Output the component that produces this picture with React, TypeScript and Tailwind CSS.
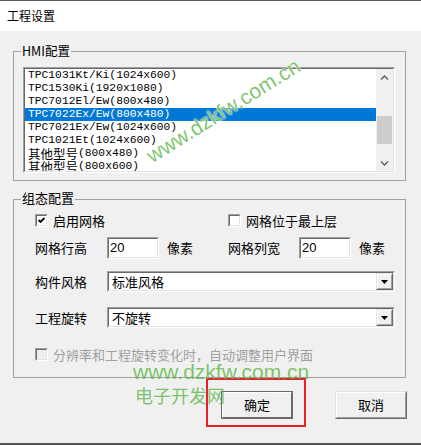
import React from 'react';

const models = [
  'TPC1031Kt/Ki(1024x600)',
  'TPC1530Ki(1920x1080)',
  'TPC7012El/Ew(800x480)',
  'TPC7022Ex/Ew(800x480)',
  'TPC7021Ex/Ew(1024x600)',
  'TPC1021Et(1024x600)',
  '其他型号(800x480)',
  '其他型号(800x600)',
];

const selectedModel = 'TPC7022Ex/Ew(800x480)';

// splits CJK part so it can be drawn a bit larger than the mono ascii
function ModelText({ text }: { text: string }) {
  const m = text.match(/^([^\x00-\x7f]+)(.*)$/);
  if (!m) return <span className="leading-[13px]">{text}</span>;
  return (
    <>
      <span className="font-['Noto_Sans_CJK_SC',sans-serif] text-[12.5px] leading-[13px]">{m[1]}</span>
      <span className="leading-[13px]">{m[2]}</span>
    </>
  );
}

function Check({ checked, disabled }: { checked?: boolean; disabled?: boolean }) {
  return (
    <span className="flex w-[13px] h-[13px] shrink-0 border border-t-[#a0a0a0] border-l-[#a0a0a0] border-r-white border-b-white">
      <span
        className={`flex flex-1 items-center justify-center border border-t-[#696969] border-l-[#696969] border-r-[#e3e3e3] border-b-[#e3e3e3] ${
          disabled ? 'bg-[#f0f0f0]' : 'bg-white'
        }`}
      >
        {checked && (
          <svg width="7" height="7" viewBox="0 0 7 7">
            <path d="M0.5 3 L2.5 5 L6.5 1" fill="none" stroke="#000" strokeWidth="1.9" />
          </svg>
        )}
      </span>
    </span>
  );
}

function NumInput({ value }: { value: string }) {
  return (
    <div className="flex w-[52px] h-[22px] border border-t-[#a0a0a0] border-l-[#a0a0a0] border-r-white border-b-white">
      <div className="flex-1 border border-t-[#696969] border-l-[#696969] border-r-[#e3e3e3] border-b-[#e3e3e3] bg-white pl-[1px] font-['Liberation_Sans',sans-serif] text-[13px] leading-[18px]">
        {value}
      </div>
    </div>
  );
}

function DropButton() {
  return (
    <div className="flex w-[17px] h-[17px] border border-t-[#e3e3e3] border-l-[#e3e3e3] border-r-[#696969] border-b-[#696969]">
      <div className="flex flex-1 items-center justify-center border border-t-white border-l-white border-r-[#a0a0a0] border-b-[#a0a0a0] bg-[#f0f0f0]">
        <svg width="7" height="4" viewBox="0 0 7 4">
          <path d="M0 0 H7 L3.5 4 Z" fill="#000" />
        </svg>
      </div>
    </div>
  );
}

function Combo({ value }: { value: string }) {
  return (
    <div className="flex w-[288px] h-[21px] border border-t-[#a0a0a0] border-l-[#a0a0a0] border-r-white border-b-white">
      <div className="flex flex-1 border border-t-[#696969] border-l-[#696969] border-r-[#e3e3e3] border-b-[#e3e3e3] bg-white">
        <span className="flex-1 pl-[3px] leading-[17px]">{value}</span>
        <DropButton />
      </div>
    </div>
  );
}

function Chevron({ down }: { down?: boolean }) {
  return (
    <svg width="9" height="6" viewBox="0 0 9 6">
      <path
        d={down ? 'M1 1.5 L4.5 5 L8 1.5' : 'M1 4.5 L4.5 1 L8 4.5'}
        fill="none"
        stroke="#606060"
        strokeWidth="1.5"
      />
    </svg>
  );
}

function WinButton({ label, isDefault }: { label: string; isDefault?: boolean }) {
  return (
    <div
      className={`flex w-[72px] h-[28px] border ${
        isDefault
          ? 'border-[#696969]'
          : 'border-t-[#e3e3e3] border-l-[#e3e3e3] border-r-[#696969] border-b-[#696969]'
      }`}
    >
      <div
        className={`flex flex-1 items-center justify-center border border-t-white border-l-white ${
          isDefault ? 'border-r-[#696969] border-b-[#696969]' : 'border-r-[#a0a0a0] border-b-[#a0a0a0]'
        } bg-[#f0f0f0]`}
      >
        {label}
      </div>
    </div>
  );
}

export default function App() {
  return (
    <div className="relative flex flex-col w-[421px] h-[445px] overflow-hidden bg-[#f0f0f0] font-['Noto_Sans_CJK_SC',sans-serif] text-[13px] text-black">
      <div className="h-[31px] shrink-0 border-t border-[#5a5a5a] bg-white pl-[7px] text-[12px] leading-[29px]">
        工程设置
      </div>

      <div className="flex flex-col pl-[13px]">
        {/* HMI配置 */}
        <div className="relative mt-[20px] w-[393px] h-[130px] border border-[#a0a0a0]">
          <span className="absolute left-[7px] top-[-9px] h-[16px] bg-[#f0f0f0] px-[1px] text-[12.5px] leading-[16px]">
            HMI配置
          </span>
          <div className="ml-[9px] mt-[15px] flex w-[372px] h-[106px] border border-t-[#a0a0a0] border-l-[#a0a0a0] border-r-white border-b-white">
            <div className="flex flex-1 overflow-hidden border border-t-[#696969] border-l-[#696969] border-r-[#e3e3e3] border-b-[#e3e3e3] bg-white">
              <ul className="flex-1 font-['Liberation_Mono',monospace] text-[11.3px]">
                {models.map((m) => (
                  <li
                    key={m}
                    className={`flex h-[13px] items-center pl-[3px] whitespace-nowrap ${
                      m === selectedModel ? 'bg-[#0078d7] text-white' : ''
                    }`}
                  >
                    <ModelText text={m} />
                  </li>
                ))}
              </ul>
              <div className="flex flex-col w-[17px] bg-[#f0f0f0]">
                <div className="flex h-[17px] items-center justify-center">
                  <Chevron />
                </div>
                <div className="ml-[1px] mt-[30px] w-[15px] h-[28px] bg-[#cdcdcd]" />
                <div className="mt-auto flex h-[17px] items-center justify-center">
                  <Chevron down />
                </div>
              </div>
            </div>
          </div>
        </div>

        {/* 组态配置 */}
        <div className="relative mt-[18px] w-[393px] h-[179px] border border-[#a0a0a0]">
          <span className="absolute left-[7px] top-[-10px] h-[16px] bg-[#f0f0f0] px-[1px] leading-[16px]">
            组态配置
          </span>

          <div className="mt-[14px] flex h-[13px] items-center pl-[21px]">
            <div className="flex w-[193px] items-center gap-[5px]">
              <Check checked />
              <span>启用网格</span>
            </div>
            <div className="flex items-center gap-[5px]">
              <Check />
              <span>网格位于最上层</span>
            </div>
          </div>

          <div className="mt-[10px] flex h-[22px] items-center pl-[21px]">
            <span className="w-[72px]">网格行高</span>
            <NumInput value="20" />
            <span className="ml-[8px] w-[61px]">像素</span>
            <span className="w-[71px]">网格列宽</span>
            <NumInput value="20" />
            <span className="ml-[8px]">像素</span>
          </div>

          <div className="mt-[12px] flex h-[21px] items-center pl-[21px]">
            <span className="w-[72px]">构件风格</span>
            <Combo value="标准风格" />
          </div>

          <div className="mt-[15px] flex h-[21px] items-center pl-[21px]">
            <span className="w-[72px]">工程旋转</span>
            <Combo value="不旋转" />
          </div>

          <div className="mt-[20px] flex h-[13px] items-center gap-[5px] pl-[21px] text-[#a0a0a0]">
            <Check disabled />
            <span>分辨率和工程旋转变化时，自动调整用户界面</span>
          </div>
        </div>

        <div className="mt-[13px] flex gap-[42px] pl-[208px]">
          <WinButton label="确定" isDefault />
          <WinButton label="取消" />
        </div>
      </div>

      <div className="mt-auto h-[2px] shrink-0 bg-[#555]" />

      {/* red highlight around the OK button */}
      <div className="absolute left-[206px] top-[378px] w-[100px] h-[49px] border-2 border-[#e8202a]" />

      {/* watermarks */}
      <div className="absolute left-[135px] top-[100px] rotate-[-32deg] whitespace-nowrap font-['Liberation_Sans',sans-serif] text-[21px] leading-none text-[#5cb646]/80 [text-shadow:0_0_2px_#fff,0_0_2px_#fff]">
        www.dzkfw.com.cn
      </div>
      <div className="absolute left-[133px] top-[361px] whitespace-nowrap font-['Liberation_Sans',sans-serif] text-[21px] leading-none text-[#5cb646]/80">
        www.dzkfw.com.cn
      </div>
      <div className="absolute left-[135px] top-[386px] whitespace-nowrap text-[18px] leading-none text-[#5cb646]/80">
        电子开发网
      </div>
    </div>
  );
}
